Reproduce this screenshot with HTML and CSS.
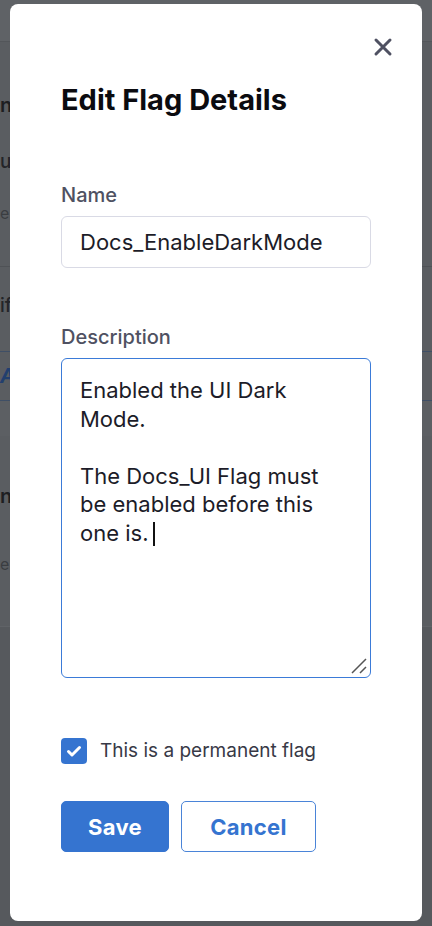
FILE: index.html
```html
<!DOCTYPE html>
<html lang="en">
<head>
<meta charset="utf-8">
<title>Edit Flag Details</title>
<link rel="stylesheet" href="styles.css">
</head>
<body>
<div class="page">
  <div class="page-top"></div>
  <section class="bg-sec sec-a">
    <div class="frag-row"><span class="frag frag-bold">n</span></div>
    <div class="frag-row gap-b"><span class="frag frag-mid">ul</span></div>
    <div class="frag-row gap-c"><span class="frag frag-light">e</span></div>
  </section>
  <section class="bg-sec sec-b">
    <div class="frag-row"><span class="frag frag-mid">if</span></div>
  </section>
  <section class="bg-sec sec-tab">
    <div class="frag-row"><span class="frag frag-blue">A</span></div>
  </section>
  <section class="bg-sec sec-gap"></section>
  <section class="bg-sec sec-c">
    <div class="frag-row"><span class="frag frag-bold">n</span></div>
    <div class="frag-row gap-d"><span class="frag frag-light">e</span></div>
  </section>
  <section class="bg-sec sec-rest"></section>
</div>

<div class="scrim">
  <div class="modal" role="dialog" aria-labelledby="dlg-title">
    <div class="modal-head">
      <button class="close" aria-label="Close">
        <svg width="20" height="20" viewBox="0 0 20 20"><path d="M3 3 L17 17 M17 3 L3 17" fill="none" stroke="currentColor" stroke-width="3" stroke-linecap="round"/></svg>
      </button>
    </div>
    <h2 class="title" id="dlg-title">Edit Flag Details</h2>

    <div class="field field-name">
      <label class="label">Name</label>
      <div class="input">Docs_EnableDarkMode</div>
    </div>

    <div class="field field-desc">
      <label class="label">Description</label>
      <div class="textarea">
        <div class="ta-text">Enabled the UI Dark<br>Mode.<br><br>The Docs_UI Flag must<br>be enabled before this<br>one is.<span class="caret"></span></div>
        <svg class="grip" width="16" height="16" viewBox="0 0 16 16"><path d="M1 15 L15 1 M9 15 L15 9" stroke="#555" stroke-width="1.5" fill="none"/></svg>
      </div>
    </div>

    <div class="check-row">
      <span class="checkbox">
        <svg width="26" height="26" viewBox="0 0 26 26"><path d="M7.5 13.5 L11 17 L18.5 9.5" fill="none" stroke="#fff" stroke-width="3" stroke-linecap="round" stroke-linejoin="round"/></svg>
      </span>
      <span class="check-label">This is a permanent flag</span>
    </div>

    <div class="actions">
      <button class="btn btn-primary">Save</button>
      <button class="btn btn-secondary">Cancel</button>
    </div>
  </div>
</div>
</body>
</html>
```

FILE: styles.css
```css
* { box-sizing: border-box; }

html, body {
  margin: 0;
  padding: 0;
}

body {
  width: 432px;
  height: 926px;
  overflow: hidden;
  background: #5a5d61;
  font-family: Inter, "Noto Sans", "Liberation Sans", sans-serif;
}

/* ---------- dimmed page behind the dialog ---------- */
.page {
  width: 432px;
}

.page-top {
  height: 42px;
  background: #5f6266;
  border-bottom: 1px solid #53565a;
}

.bg-sec {
  display: flex;
  flex-direction: column;
}

.frag-row {
  height: 30px;
  display: flex;
  align-items: center;
  white-space: nowrap;
}

.frag {
  flex: none;
  line-height: 30px;
}

.frag-bold { font-size: 20px; font-weight: 600; color: #1d1e21; }
.frag-mid { font-size: 19px; font-weight: 500; color: #232428; }
.frag-light { font-size: 16px; color: #3a3d41; }
.frag-blue { font-size: 20px; font-weight: 700; font-style: italic; color: #223f6e; }

.sec-a {
  height: 225px;
  padding-top: 48px;
  border-bottom: 1px solid #4f5256;
}
.gap-b { margin-top: 27px; }
.gap-c { margin-top: 21px; }

.sec-b {
  height: 85px;
  padding-top: 24px;
  border-bottom: 1px solid #3f4f66;
}

.sec-tab {
  height: 49px;
  justify-content: center;
  border-bottom: 1px solid #3f4f66;
}

.sec-gap {
  height: 35px;
  background: #5c5f63;
}

.sec-c {
  height: 191px;
  padding-top: 45px;
  border-bottom: 1px solid #606367;
}
.gap-d { margin-top: 38px; }

.sec-rest {
  height: 300px;
  background: #56595d;
}

/* ---------- overlay & dialog ---------- */
.scrim {
  position: fixed;
  inset: 0;
  display: flex;
  padding: 4px 10px 5px 10px;
}

.modal {
  flex: 1;
  background: #fff;
  border-radius: 8px;
  padding: 33px 51px 0 51px;
  display: flex;
  flex-direction: column;
}

.modal-head {
  display: flex;
  justify-content: flex-end;
  margin-right: -22px;
  height: 20px;
}

.close {
  width: 20px;
  height: 20px;
  padding: 0;
  border: 0;
  background: none;
  color: #4f5162;
  display: flex;
}

.title {
  margin: 26px 0 0 0;
  font-size: 29px;
  line-height: 34px;
  font-weight: 700;
  color: #0b0b10;
}

.field {
  display: flex;
  flex-direction: column;
}

.field-name { margin-top: 66px; }
.field-desc { margin-top: 57px; }

.label {
  font-size: 20px;
  line-height: 24px;
  font-weight: 500;
  color: #4f5162;
}

.input {
  margin-top: 9px;
  height: 52px;
  border: 1px solid #d9dae5;
  border-radius: 6px;
  padding: 0 18px;
  display: flex;
  align-items: center;
  font-size: 22px;
  color: #1c1c28;
}

.textarea {
  position: relative;
  margin-top: 9px;
  height: 320px;
  border: 1px solid #3b7bd8;
  border-radius: 6px;
  padding: 17px 18px;
}

.ta-text {
  font-size: 22px;
  line-height: 28.6px;
  color: #1c1c28;
}

.caret {
  display: inline-block;
  width: 2px;
  height: 24px;
  margin-left: 5px;
  background: #111;
  vertical-align: -5px;
}

.grip {
  position: absolute;
  right: 3px;
  bottom: 3px;
}

.check-row {
  margin-top: 60px;
  display: flex;
  align-items: center;
  gap: 13px;
  height: 26px;
}

.checkbox {
  width: 26px;
  height: 26px;
  border-radius: 4px;
  background: #3574d0;
  display: flex;
}

.check-label {
  font-size: 19px;
  line-height: 26px;
  color: #383946;
}

.actions {
  margin-top: 37px;
  display: flex;
  gap: 12px;
}

.btn {
  height: 51px;
  border-radius: 5px;
  font-family: Inter, "Noto Sans", "Liberation Sans", sans-serif;
  font-size: 22px;
  font-weight: 700;
  letter-spacing: 0.3px;
  display: flex;
  align-items: center;
  justify-content: center;
}

.btn-primary {
  width: 108px;
  background: #3574d0;
  border: 1px solid #3574d0;
  color: #fff;
}

.btn-secondary {
  width: 135px;
  background: #fff;
  border: 1px solid #4a84d8;
  color: #3574d0;
}
```
